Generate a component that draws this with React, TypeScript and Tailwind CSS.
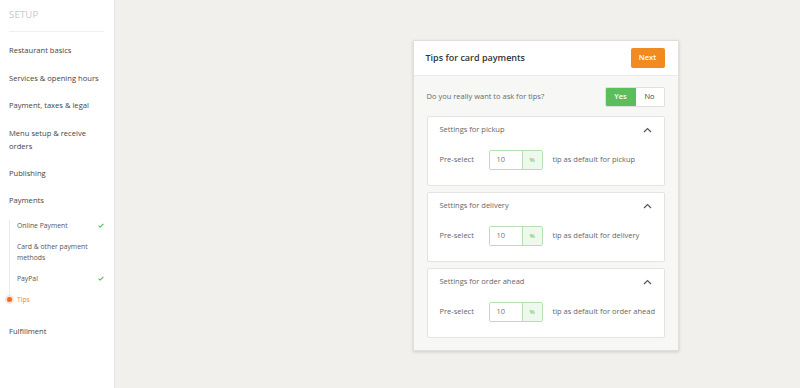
import React from "react";

const font = { fontFamily: '"Open Sans", "Noto Sans", sans-serif' };

function Check() {
  return (
    <svg width="6" height="5" viewBox="0 0 6 5" className="shrink-0">
      <path d="M0.6 2.6 L2.2 4.1 L5.4 0.8" fill="none" stroke="#4cb84c" strokeWidth="1.1" />
    </svg>
  );
}

function Chevron() {
  return (
    <svg width="9" height="6" viewBox="0 0 9 6">
      <path d="M1 5 L4.5 1.5 L8 5" fill="none" stroke="#555" strokeWidth="1.2" />
    </svg>
  );
}

function Section({ title, label }: { title: string; label: string }) {
  return (
    <div className="bg-white border border-[#e3e3e1] rounded-[2px] h-[70px] px-[12px] pt-[6px]">
      <div className="flex items-center justify-between h-[13px]">
        <span className="text-[7.5px] text-[#666]">{title}</span>
        <div className="mr-0"><Chevron /></div>
      </div>
      <div className="flex items-center mt-[14px] h-[20px]">
        <span className="text-[7.5px] text-[#666] w-[49px] shrink-0">Pre-select</span>
        <div className="flex h-[20px] border border-[#b6dfb2] rounded-[2px] shrink-0">
          <div className="w-[33px] bg-white flex items-center pl-[7px] text-[7.5px] text-[#777] border-r border-[#b6dfb2]">10</div>
          <div className="w-[19px] bg-[#eef8ec] flex items-center justify-center text-[6px] font-semibold text-[#7cc474]">%</div>
        </div>
        <span className="text-[7.5px] text-[#666] ml-[10px] whitespace-nowrap">{label}</span>
      </div>
    </div>
  );
}

export default function App() {
  return (
    <div style={font} className="flex w-[800px] h-[388px] bg-[#f1f0ec]">
      <aside className="w-[115px] shrink-0 bg-white border-r border-[#e4e3df] px-[9px] pt-[8px]">
        <div className="text-[9.5px] text-[#c8c8c8] tracking-[0.2px] h-[14px] leading-[14px]">SETUP</div>
        <div className="h-px bg-[#efefef] mt-[9px] w-[95px]"></div>
        <div className="text-[7.6px] text-[#444] leading-[13px]">
          <div className="mt-[12px]">Restaurant basics</div>
          <div className="mt-[14.5px]">Services &amp; opening hours</div>
          <div className="mt-[14.5px]">Payment, taxes &amp; legal</div>
          <div className="mt-[14.5px]">Menu setup &amp; receive<br />orders</div>
          <div className="mt-[14px]">Publishing</div>
          <div className="mt-[14.5px]">Payments</div>
        </div>
        <div className="relative mt-[13px] border-l border-[#ebebeb] pl-[7px] text-[6.8px] text-[#555] leading-[11px] h-[83px]">
          <div className="flex items-center justify-between pr-[1px] mt-[2px]"><span>Online Payment</span><Check /></div>
          <div className="mt-[10px]">Card &amp; other payment<br />methods</div>
          <div className="flex items-center justify-between pr-[1px] mt-[10px]"><span>PayPal</span><Check /></div>
          <div className="mt-[10px] text-[#f28a3c]">Tips</div>
          <div className="absolute left-[-3px] top-[77px] w-[5px] h-[5px] rounded-full bg-[#f26b1d] ring-2 ring-[#fde3d3]"></div>
        </div>
        <div className="text-[7.6px] text-[#444] leading-[13px] mt-[22px]">Fulfillment</div>
      </aside>
      <main className="flex-1 flex justify-center pl-[176px] pt-[40px]">
        <div className="w-[266px] h-[311px] bg-[#f7f7f5] border border-[#e0dfdc] shadow-[0_1px_3px_rgba(0,0,0,0.15)]">
          <div className="h-[35px] bg-white border-b border-[#ebebea] flex items-center justify-between pl-[12px] pr-[13px]">
            <span className="text-[9px] font-semibold text-[#333]">Tips for card payments</span>
            <button className="h-[20px] w-[34px] bg-[#f18a1f] rounded-[2px] text-white text-[7.5px] font-semibold">Next</button>
          </div>
          <div className="px-[13px] pt-[11px]">
            <div className="flex items-center justify-between h-[20px]">
              <span className="text-[7.5px] text-[#6a6a6a]">Do you really want to ask for tips?</span>
              <div className="flex h-[20px] border border-[#e0e0e0] rounded-[2px] overflow-hidden">
                <div className="w-[30px] bg-[#5cbd5c] text-white text-[7.5px] font-semibold flex items-center justify-center">Yes</div>
                <div className="w-[28px] bg-white text-[#444] text-[7.5px] flex items-center justify-center">No</div>
              </div>
            </div>
            <div className="flex flex-col gap-[6px] mt-[9px]">
              <Section title="Settings for pickup" label="tip as default for pickup" />
              <Section title="Settings for delivery" label="tip as default for delivery" />
              <Section title="Settings for order ahead" label="tip as default for order ahead" />
            </div>
          </div>
        </div>
      </main>
    </div>
  );
}
